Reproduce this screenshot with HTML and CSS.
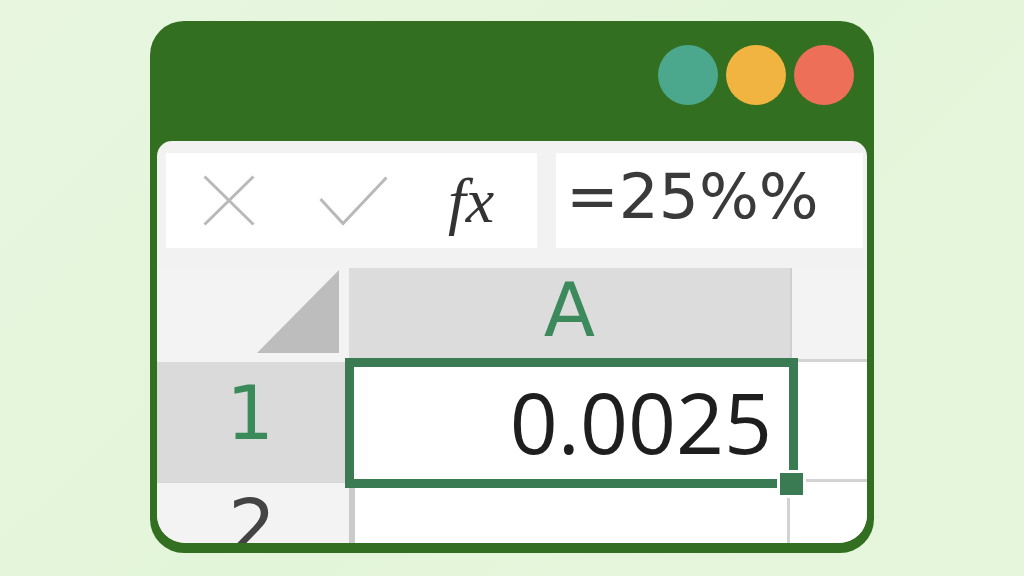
FILE: index.html
```html
<!DOCTYPE html>
<html lang="en">
<head>
<meta charset="utf-8">
<title>Excel percent</title>
<link rel="stylesheet" href="styles.css">
</head>
<body>
<div class="window">
  <div class="titlebar">
    <span class="dot teal"></span>
    <span class="dot yellow"></span>
    <span class="dot red"></span>
  </div>
  <div class="sheet">
    <div class="formula-bar">
      <div class="fb-controls">
        <svg class="ic-x" width="52" height="51" viewBox="0 0 52 51"><path d="M1.5 1.5 L50.5 49.5 M50.5 1.5 L1.5 49.5" stroke="#b9b9b9" stroke-width="3" fill="none"/></svg>
        <svg class="ic-check" width="69" height="50" viewBox="0 0 69 50"><path d="M1.5 23 L24 47.5 L67.5 1.5" stroke="#b9b9b9" stroke-width="3" fill="none"/></svg>
        <span class="fx">fx</span>
      </div>
      <div class="fb-input">=25%%</div>
    </div>
    <div class="grid">
      <div class="corner">
        <svg class="tri" width="82" height="83" viewBox="0 0 82 83"><polygon points="82,0 82,83 0,83" fill="#bdbdbd"/></svg>
      </div>
      <div class="col-head col-a">A</div>
      <div class="col-head col-b"></div>
      <div class="row-head row-1">1</div>
      <div class="cell a1">0.0025</div>
      <div class="cell b1"></div>
      <div class="row-head row-2">2</div>
      <div class="cell a2"></div>
      <div class="cell b2"></div>
      <div class="selection"><span class="handle"></span></div>
    </div>
  </div>
</div>
</body>
</html>
```

FILE: styles.css
```css
html, body {
  margin: 0;
  padding: 0;
}
body {
  width: 1024px;
  height: 576px;
  overflow: hidden;
  background: linear-gradient(135deg, #e8f6e0 0%, #e3f5d9 50%, #e6f6dd 100%);
  padding: 21px 0 0 150px;
  box-sizing: border-box;
  font-family: "DejaVu Sans", sans-serif;
}
.window {
  width: 724px;
  height: 532px;
  background: #336f20;
  border-radius: 34px;
  padding: 0 7px 10px 7px;
  box-sizing: border-box;
  display: flex;
  flex-direction: column;
}
.titlebar {
  height: 120px;
  flex: none;
  display: flex;
  justify-content: flex-end;
  align-items: flex-start;
  gap: 8px;
  padding: 24px 13px 0 0;
  box-sizing: border-box;
}
.dot {
  width: 60px;
  height: 60px;
  border-radius: 50%;
}
.teal { background: #4ca88c; }
.yellow { background: #f1b441; }
.red { background: #ee6f58; }

.sheet {
  flex: 1;
  background: #f2f2f2;
  border-radius: 15px 15px 28px 28px;
  overflow: hidden;
  display: flex;
  flex-direction: column;
}
.formula-bar {
  display: flex;
  gap: 19px;
  padding: 12px 4px 0 9px;
  height: 107px;
  box-sizing: border-box;
  flex: none;
}
.fb-controls {
  width: 371px;
  height: 95px;
  background: #ffffff;
  display: flex;
  align-items: center;
  padding-left: 37px;
  box-sizing: border-box;
}
.ic-x { display: block; flex: none; }
.ic-check { display: block; flex: none; margin-left: 64px; }
.fx {
  margin-left: 60px;
  font-family: "Liberation Serif", serif;
  font-style: italic;
  font-size: 64px;
  line-height: 1;
  color: #333333;
  margin-top: 0;
}
.fb-input {
  flex: 1;
  height: 95px;
  background: #ffffff;
  font-family: "DejaVu Sans", sans-serif;
  font-size: 63px;
  line-height: 1;
  color: #3a3a3a;
  padding: 12px 0 0 10px;
  box-sizing: border-box;
}

.grid {
  position: relative;
  margin-top: 20px;
  flex: 1;
  display: grid;
  grid-template-columns: 192px 441px 1fr;
  grid-template-rows: 94px 120px 1fr;
}
.corner {
  background: #f3f3f3;
  position: relative;
}
.tri {
  position: absolute;
  right: 10px;
  bottom: 9px;
  display: block;
}
.col-head {
  font-family: "DejaVu Sans", sans-serif;
  font-size: 75px;
  line-height: 1;
  text-align: center;
  box-sizing: border-box;
}
.col-a {
  background: #dcdcdc;
  color: #3c8a5c;
  padding-top: 5px;
}
.col-b {
  background: #f3f3f3;
  border-left: 2px solid #cfcfcf;
  border-bottom: 3px solid #d4d4d4;
}
.row-head {
  font-family: "DejaVu Sans", sans-serif;
  font-size: 75px;
  line-height: 1;
  text-align: center;
  box-sizing: border-box;
  overflow: hidden;
}
.row-1 {
  background: #dadada;
  color: #3a8a5a;
  padding: 23px 6px 0 0;
  line-height: 0.76;
}
.row-2 {
  background: #f3f3f3;
  color: #444444;
  padding: 7px 2px 0 0;
  border-top: 1px solid #d6d6d6;
}
.cell {
  background: #ffffff;
  box-sizing: border-box;
}
.a1 {
  font-family: "Open Sans", sans-serif;
  font-size: 84px;
  line-height: 1;
  color: #1e1e1e;
  text-align: right;
  padding: 18px 18px 0 0;
  overflow: hidden;
}
.b1 {
  border-bottom: 3px solid #d3d3d3;
}
.a2 {
  border-left: 6px solid #cbcbcb;
  border-right: 3px solid #d2d2d2;
}
.selection {
  position: absolute;
  left: 188px;
  top: 90px;
  width: 453px;
  height: 130px;
  border: 9px solid #3b7b53;
  box-sizing: border-box;
}
.handle {
  position: absolute;
  left: 423px;
  top: 103px;
  width: 29px;
  height: 28px;
  background: #3b7b53;
  border: 3px solid #ffffff;
  box-sizing: border-box;
}
```
